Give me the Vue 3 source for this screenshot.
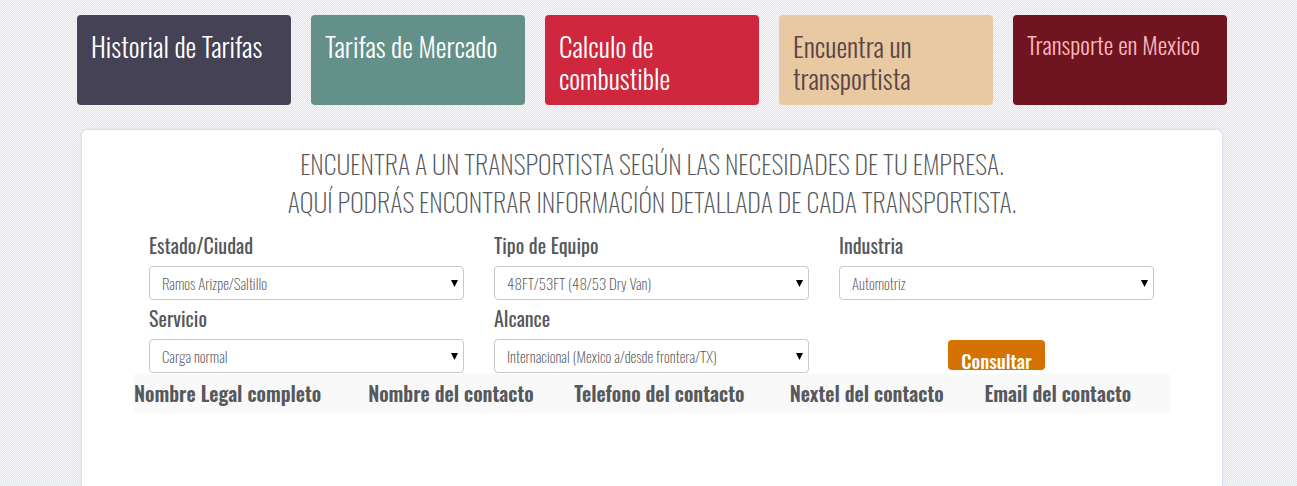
<script setup>
import { ref } from 'vue'

const cards = [
  { text: 'Historial de Tarifas', tone: 'slate' },
  { text: 'Tarifas de Mercado', tone: 'green' },
  { text: 'Calculo de combustible', tone: 'red' },
  { text: 'Encuentra un transportista', tone: 'sand' },
  { text: 'Transporte en Mexico', tone: 'wine' },
]

const fields = ref([
  { id: 'estado', label: 'Estado/Ciudad', value: 'Ramos Arizpe/Saltillo' },
  { id: 'equipo', label: 'Tipo de Equipo', value: '48FT/53FT (48/53 Dry Van)' },
  { id: 'industria', label: 'Industria', value: 'Automotriz' },
  { id: 'servicio', label: 'Servicio', value: 'Carga normal' },
  { id: 'alcance', label: 'Alcance', value: 'Internacional (Mexico a/desde frontera/TX)' },
])

const columns = [
  'Nombre Legal completo',
  'Nombre del contacto',
  'Telefono del contacto',
  'Nextel del contacto',
  'Email del contacto',
]
</script>

<template>
  <div class="page">
    <nav class="cards">
      <a v-for="c in cards" :key="c.text" href="#" class="card" :class="c.tone">{{ c.text }}</a>
    </nav>
    <main class="panel">
      <h1 class="title">
        Encuentra a un transportista según las necesidades de tu empresa.<br />
        Aquí podrás encontrar información detallada de cada transportista.
      </h1>
      <form class="filters" @submit.prevent>
        <div v-for="f in fields" :key="f.id" class="field">
          <label :for="f.id">{{ f.label }}</label>
          <div class="control">
            <select :id="f.id" v-model="f.value">
              <option>{{ f.value }}</option>
            </select>
            <svg class="arrow" viewBox="0 0 7 7" aria-hidden="true"><path d="M0 0h7L3.5 7z" /></svg>
          </div>
        </div>
        <div class="action">
          <button type="submit">Consultar</button>
        </div>
      </form>
      <table class="results">
        <thead>
          <tr>
            <th v-for="c in columns" :key="c" scope="col">{{ c }}</th>
          </tr>
        </thead>
      </table>
    </main>
  </div>
</template>

<style>
body {
  background: repeating-conic-gradient(#e4e7ea 0 25%, #f6f6f8 0 50%) 0 0 / 2px 2px;
}
</style>

<style scoped>
.page {
  box-sizing: border-box;
  min-height: 100vh;
  max-width: 1157px;
  margin: 0 auto;
  padding: 15px 0 0 7px;
  display: flex;
  flex-direction: column;
  gap: 24px;
  font-family: Oswald, "Liberation Sans Narrow", "Liberation Sans", sans-serif;
  color: #55585c;
}
.cards {
  display: grid;
  grid-template-columns: repeat(5, 1fr);
  gap: 20px;
}
.card {
  box-sizing: border-box;
  min-height: 90px;
  padding: 15px 14px 11px;
  border-radius: 4px;
  font-size: 27px;
  font-weight: 300;
  line-height: 32px;
  color: #fff;
  text-decoration: none;
}
.slate { background: #444254; }
.green { background: #639189; }
.red { background: #cf273d; }
.sand { background: #e8c9a2; color: #5c4646; }
.wine { background: #6e151f; color: #ffb3bd; padding-top: 13px; font-size: 24px; }
.panel {
  flex: 1;
  margin: 0 4px;
  padding: 15px 52px 0;
  background: #fff;
  border: 1px solid #dcdfee;
  border-bottom: 0;
  border-radius: 6px 6px 0 0;
  box-shadow: 0 0 3px #dcdfee;
}
.title {
  margin: 0;
  font-size: 26px;
  line-height: 38px;
  font-weight: 200;
  text-align: center;
  text-transform: uppercase;
}
.filters {
  display: grid;
  grid-template-columns: repeat(3, 1fr);
  column-gap: 30px;
  padding: 6px 16px 0 15px;
}
.field label {
  display: block;
  font-size: 20px;
  line-height: 28px;
  padding: 4px 0 7px;
}
.control {
  position: relative;
}
select {
  display: block;
  box-sizing: border-box;
  width: 100%;
  height: 34px;
  padding: 0 24px 0 12px;
  appearance: none;
  background: #fff;
  border: 1px solid #c8c8c8;
  border-radius: 4px;
  font-family: inherit;
  font-size: 15px;
  font-weight: 200;
  color: #555;
}
.arrow {
  position: absolute;
  right: 6px;
  top: 14px;
  width: 7px;
  height: 7px;
}
.action {
  display: flex;
  justify-content: center;
  align-items: flex-end;
  padding-bottom: 3px;
}
button {
  height: 30px;
  padding: 9px 13px 0;
  border: 0;
  border-radius: 4px;
  overflow: hidden;
  background: #d57100;
  color: #fff;
  font-family: inherit;
  font-size: 19px;
  font-weight: 500;
  line-height: 20px;
}
.results {
  width: 100%;
  margin-top: 1px;
  table-layout: fixed;
  border-collapse: collapse;
  background: #f9f9f9;
}
th {
  padding: 0 0 2px;
  height: 37px;
  text-align: left;
  white-space: nowrap;
  font-size: 20px;
  font-weight: 600;
}
th:nth-child(1) { width: 22.6%; }
th:nth-child(2) { width: 19.9%; }
th:nth-child(3) { width: 20.8%; }
th:nth-child(4) { width: 18.8%; }
</style>
